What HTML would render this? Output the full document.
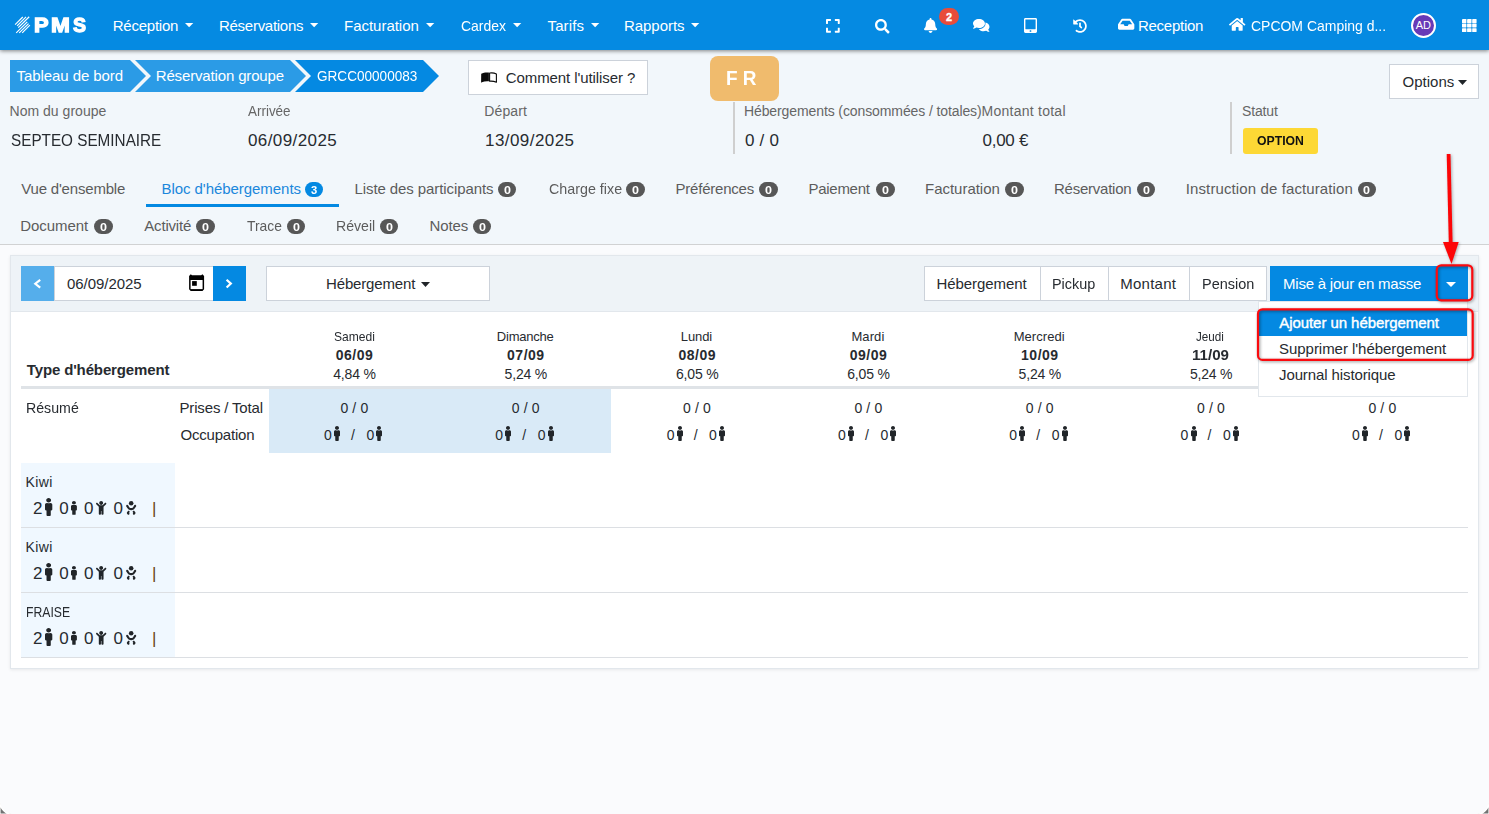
<!DOCTYPE html>
<html lang="fr"><head><meta charset="utf-8"><title>PMS - Réservation groupe</title>
<style>
html,body{margin:0;padding:0}
body{width:1489px;height:814px;position:relative;overflow:hidden;background:#fafbfd;font-family:"Liberation Sans",sans-serif;color:#212529}
.a{position:absolute;box-sizing:border-box}
.t{position:absolute;white-space:pre;line-height:1;margin:0;padding:0}
svg{position:absolute;overflow:visible}
.btn{background:#fff;border:1px solid #ccd2da}
.bd{border-radius:7.5px;width:18.4px;height:15px}
</style></head><body>
<!-- top area -->
<div class="a" style="left:0;top:0;width:1489px;height:245px;background:#f2f7fb;border-bottom:1px solid #d1d2d3"></div>
<!-- navbar -->
<div class="a" style="left:0;top:0;width:1489px;height:50px;background:#058ae2;box-shadow:0 1px 4px rgba(0,0,0,.48)"></div>
<svg style="left:0px;top:0px" width="40" height="40" viewBox="0 0 40 40"><line x1="15.1" y1="24.70" x2="22.8" y2="17.00" stroke="#fff" stroke-width="1.15"/><line x1="17.1" y1="25.80" x2="26.0" y2="16.90" stroke="#fff" stroke-width="1.15"/><line x1="18.3" y1="27.65" x2="29.2" y2="16.75" stroke="#fff" stroke-width="1.15"/><line x1="16.2" y1="32.90" x2="27.3" y2="21.80" stroke="#fff" stroke-width="1.15"/><line x1="19.2" y1="32.95" x2="28.6" y2="23.55" stroke="#fff" stroke-width="1.15"/><line x1="22.2" y1="32.90" x2="29.9" y2="25.20" stroke="#fff" stroke-width="1.15"/></svg><svg style="left:184.9px;top:22.9px" width="8.3" height="4.2" viewBox="0 0 8.3 4.2"><polygon points="0,0 8.300,0 4.150,4.200" fill="#fff"/></svg><svg style="left:309.5px;top:22.9px" width="8.3" height="4.2" viewBox="0 0 8.3 4.2"><polygon points="0,0 8.300,0 4.150,4.200" fill="#fff"/></svg><svg style="left:425.5px;top:22.9px" width="8.3" height="4.2" viewBox="0 0 8.3 4.2"><polygon points="0,0 8.300,0 4.150,4.200" fill="#fff"/></svg><svg style="left:512.5px;top:22.9px" width="8.3" height="4.2" viewBox="0 0 8.3 4.2"><polygon points="0,0 8.300,0 4.150,4.200" fill="#fff"/></svg><svg style="left:590.5px;top:22.9px" width="8.3" height="4.2" viewBox="0 0 8.3 4.2"><polygon points="0,0 8.300,0 4.150,4.200" fill="#fff"/></svg><svg style="left:690.5px;top:22.9px" width="8.3" height="4.2" viewBox="0 0 8.3 4.2"><polygon points="0,0 8.300,0 4.150,4.200" fill="#fff"/></svg>
<svg style="left:825.75px;top:18.2px" width="13.75" height="15.7" viewBox="0 0 448 512"><path d="M0 180V56c0-13.300 10.700-24 24-24h124c6.600 0 12 5.400 12 12v40c0 6.600-5.400 12-12 12H64v84c0 6.600-5.400 12-12 12H12c-6.600 0-12-5.400-12-12zM288 44v40c0 6.600 5.400 12 12 12h84v84c0 6.600 5.400 12 12 12h40c6.600 0 12-5.400 12-12V56c0-13.300-10.700-24-24-24H300c-6.600 0-12 5.400-12 12zm148 276h-40c-6.600 0-12 5.400-12 12v84h-84c-6.600 0-12 5.400-12 12v40c0 6.600 5.400 12 12 12h124c13.300 0 24-10.700 24-24V332c0-6.600-5.400-12-12-12zM160 468v-40c0-6.600-5.400-12-12-12H64v-84c0-6.600-5.400-12-12-12H12c-6.600 0-12 5.400-12 12v124c0 13.300 10.700 24 24 24h124c6.600 0 12-5.400 12-12z" fill="#fff"/></svg><svg style="left:874.5px;top:18.6px" width="14.6" height="14.6" viewBox="0 0 512 512"><path d="M505 442.700L405.300 343c-4.500-4.500-10.600-7-17-7H372c27.600-35.300 44-79.700 44-128C416 93.100 322.900 0 208 0S0 93.100 0 208s93.100 208 208 208c48.300 0 92.700-16.400 128-44v16.300c0 6.400 2.500 12.500 7 17l99.700 99.700c9.400 9.400 24.600 9.400 33.900 0l28.300-28.300c9.400-9.400 9.400-24.600.1-34zM208 336c-70.700 0-128-57.200-128-128 0-70.700 57.200-128 128-128 70.700 0 128 57.200 128 128 0 70.700-57.200 128-128 128z" fill="#fff"/></svg><svg style="left:924.2px;top:18.1px" width="13.1" height="15" viewBox="0 0 448 512"><path d="M224 512c35.320 0 63.970-28.650 63.970-64H160.030c0 35.350 28.650 64 63.970 64zm215.390-149.710c-19.320-20.760-55.470-51.990-55.470-154.290 0-77.700-54.480-139.900-127.940-155.160V32c0-17.670-14.320-32-31.980-32s-31.980 14.330-31.980 32v20.840C118.560 68.100 64.080 130.300 64.080 208c0 102.300-36.150 133.530-55.470 154.290-6 6.450-8.660 14.160-8.610 21.710.11 16.400 12.980 32 32.100 32h383.800c19.120 0 32-15.600 32.100-32 .05-7.550-2.610-15.270-8.610-21.710z" fill="#fff"/></svg><div class="a" style="left:939px;top:8px;width:20px;height:17px;border-radius:8.5px;background:#e84c3a"></div><svg style="left:972.6px;top:18.7px" width="16.4" height="13.1" viewBox="0 0 17 13.5"><path d="M6.2,0C2.8,0,0,2.1,0,4.7c0,1.1,.5,2.1,1.3,2.9C1,8.600,.3,9.300,.1,9.500c-.2,.2,0,.5,.2,.5c1.400,0,2.600-.6,3.300-1.100c.8,.3,1.700,.4,2.600,.4c3.400,0,6.200-2.100,6.200-4.700S9.600,0,6.200,0z" fill="#fff"/><path d="M13.400,5.200c0,2.900-3,5.200-6.900,5.300c1,1.300,2.900,2.100,5,2.100c.9,0,1.800-.1,2.600-.4c.7,.5,1.800,1.100,3.200,1.100c.3,0,.4-.3,.2-.5c-.2-.2-.9-.9-1.200-1.900c.8-.8,1.300-1.800,1.300-2.900c0-2.200-1.800-4-4.300-4.500c.1,.5,.1,1.100,.1,1.700z" fill="#fff" transform="translate(-.5,0)"/></svg><svg style="left:1023.7px;top:18px" width="13" height="15" viewBox="0 0 448 512"><path d="M400 0H48C21.500 0 0 21.500 0 48v416c0 26.500 21.500 48 48 48h352c26.500 0 48-21.500 48-48V48c0-26.500-21.500-48-48-48zM224 480c-17.700 0-32-14.300-32-32s14.300-32 32-32 32 14.300 32 32-14.300 32-32 32zm176-108c0 6.600-5.400 12-12 12H60c-6.600 0-12-5.400-12-12V60c0-6.600 5.400-12 12-12h328c6.600 0 12 5.400 12 12v312z" fill="#fff"/></svg><svg style="left:1073px;top:19.2px" width="14" height="14" viewBox="0 0 512 512"><path d="M504 255.531c.253 136.640-111.180 248.372-247.820 248.468-59.015.042-113.223-20.530-155.822-54.911-11.077-8.940-11.905-25.541-1.839-35.607l11.267-11.267c8.609-8.609 22.353-9.551 31.891-1.984C173.062 425.135 212.781 440 256 440c101.705 0 184-82.311 184-184 0-101.705-82.311-184-184-184-48.814 0-93.149 18.969-126.068 49.932l50.754 50.754c10.080 10.080 2.941 27.314-11.313 27.314H24c-8.837 0-16-7.163-16-16V38.627c0-14.254 17.234-21.393 27.314-11.314l49.372 49.372C129.209 34.136 189.552 8 256 8c136.810 0 247.747 110.780 248 247.531zm-180.912 78.784l9.823-12.630c8.138-10.463 6.253-25.542-4.210-33.679L288 256.349V152c0-13.255-10.745-24-24-24h-16c-13.255 0-24 10.745-24 24v135.651l65.409 50.874c10.463 8.137 25.541 6.253 33.679-4.210z" fill="#fff"/></svg><svg style="left:1117.7px;top:17.2px" width="16.35" height="14.53" viewBox="0 0 576 512"><path d="M567.938 243.908L462.250 85.374A48.003 48.003 0 0 0 422.311 64H153.689a48 48 0 0 0-39.938 21.374L8.062 243.908A47.994 47.994 0 0 0 0 270.533V400c0 26.510 21.490 48 48 48h480c26.510 0 48-21.490 48-48V270.533a47.994 47.994 0 0 0-8.062-26.625zM162.252 128h251.497l85.333 128H376l-32 64H232l-32-64H76.918l85.334-128z" fill="#fff"/></svg><svg style="left:1229.1px;top:17.2px" width="16.4" height="14.6" viewBox="0 0 576 512"><path d="M280.370 148.260L96 300.110V464a16 16 0 0 0 16 16l112.060-.290a16 16 0 0 0 15.920-16V368a16 16 0 0 1 16-16h64a16 16 0 0 1 16 16v95.640a16 16 0 0 0 16 16.050L464 480a16 16 0 0 0 16-16V300L295.670 148.260a12.190 12.190 0 0 0-15.300 0zM571.600 251.470L488 182.560V44.050a12 12 0 0 0-12-12h-56a12 12 0 0 0-12 12v72.610L318.470 43a48 48 0 0 0-61 0L4.340 251.470a12 12 0 0 0-1.600 16.900l25.500 31A12 12 0 0 0 45.150 301l235.220-193.740a12.190 12.190 0 0 1 15.300 0L530.900 301a12 12 0 0 0 16.900-1.600l25.500-31a12 12 0 0 0-1.700-16.930z" fill="#fff"/></svg><div class="a" style="left:1411px;top:13px;width:25px;height:25px;border-radius:50%;background:#673ab7;border:2px solid #fff"></div><svg style="left:1462px;top:19px" width="15" height="13.2" viewBox="0 0 15 13.200"><rect x="0.0" y="0.0" width="4.400" height="3.900" rx=".5" fill="#fff"/><rect x="5.1" y="0.0" width="4.400" height="3.900" rx=".5" fill="#fff"/><rect x="10.2" y="0.0" width="4.400" height="3.900" rx=".5" fill="#fff"/><rect x="0.0" y="4.6" width="4.400" height="3.900" rx=".5" fill="#fff"/><rect x="5.1" y="4.6" width="4.400" height="3.900" rx=".5" fill="#fff"/><rect x="10.2" y="4.6" width="4.400" height="3.900" rx=".5" fill="#fff"/><rect x="0.0" y="9.2" width="4.400" height="3.900" rx=".5" fill="#fff"/><rect x="5.1" y="9.2" width="4.400" height="3.900" rx=".5" fill="#fff"/><rect x="10.2" y="9.2" width="4.400" height="3.900" rx=".5" fill="#fff"/></svg>
<!-- breadcrumb -->
<svg style="left:0;top:60px" width="460" height="32" viewBox="0 60 460 32">
<polygon points="10,60 130,60 146,76 130,92 10,92" fill="#2b9be6"/>
<polygon points="135,60 290,60 306,76 290,92 135,92 151,76" fill="#2b9be6"/>
<polygon points="295,60 423,60 439,76 423,92 295,92 311,76" fill="#0489e2"/>
</svg>
<div class="a btn" style="left:468px;top:60px;width:180px;height:35px"></div>
<svg style="left:481px;top:72.3px" width="16" height="10.8" viewBox="0 0 16 10.8"><path d="M0.200,1.800C2.600,.5,5.400,.2,7.900,.6V9.300C5.300,9,2.800,9.400,.9,10.300L.1,10.700z" fill="#0a0a0a"/><path d="M15.400,1.900C13.400,.9,10.800,.7,8.600,1V9.200C10.900,9,13.300,9.300,15.400,10.300z" fill="#fff" stroke="#0a0a0a" stroke-width="1.100" stroke-linejoin="round"/></svg>
<div class="a" style="left:710px;top:56px;width:69px;height:45px;border-radius:8px;background:#f0bb6d"></div>
<div class="a btn" style="left:1389px;top:64px;width:90px;height:35px"></div>
<svg style="left:1457.5px;top:80px" width="9" height="5" viewBox="0 0 9 5"><polygon points="0,0 9,0 4.5,5" fill="#212529"/></svg>
<!-- separators -->
<div class="a" style="left:733px;top:102px;width:2px;height:52px;background:#cfcfcf"></div>
<div class="a" style="left:1230px;top:102px;width:2px;height:52px;background:#cfcfcf"></div>
<div class="a" style="left:1243px;top:128px;width:75px;height:26px;border-radius:3px;background:#fdd835"></div>
<!-- tab underline -->
<div class="a" style="left:146px;top:204px;width:193px;height:3px;background:#0489e2"></div>
<div class="a bd" style="left:304.8px;top:182px;background:#0489e2"></div><div class="a bd" style="left:498px;top:182px;background:#575757"></div><div class="a bd" style="left:626.25px;top:182px;background:#575757"></div><div class="a bd" style="left:759.25px;top:182px;background:#575757"></div><div class="a bd" style="left:876.25px;top:182px;background:#575757"></div><div class="a bd" style="left:1005.25px;top:182px;background:#575757"></div><div class="a bd" style="left:1137px;top:182px;background:#575757"></div><div class="a bd" style="left:1357.5px;top:182px;background:#575757"></div><div class="a bd" style="left:94.25px;top:219px;background:#575757"></div><div class="a bd" style="left:196.25px;top:219px;background:#575757"></div><div class="a bd" style="left:287px;top:219px;background:#575757"></div><div class="a bd" style="left:380px;top:219px;background:#575757"></div><div class="a bd" style="left:473px;top:219px;background:#575757"></div>
<!-- card -->
<div class="a" style="left:10px;top:255px;width:1469px;height:414px;background:#fff;border:1px solid #e2e7ec;box-shadow:0 1px 3px rgba(0,0,0,.08)"></div>
<div class="a" style="left:11px;top:256px;width:1467px;height:56px;background:#eef3f7;border-bottom:1px solid #e2e7ec"></div>
<!-- toolbar -->
<div class="a" style="left:21px;top:266px;width:33px;height:35px;background:#55aeeb"></div>
<div class="a btn" style="left:54px;top:266px;width:160px;height:35px"></div>
<div class="a" style="left:213px;top:266px;width:33px;height:35px;background:#0489e2"></div>
<svg style="left:0;top:0" width="1489" height="814" viewBox="0 0 1489 814">
<polyline points="40.200,279.800 35.300,283.750 40.200,287.700" fill="none" stroke="#fff" stroke-width="2.200"/>
<polyline points="226.600,279.700 230.850,283.600 226.600,287.500" fill="none" stroke="#fff" stroke-width="2.200"/>
</svg>
<svg style="left:188.9px;top:274px" width="15.2" height="17" viewBox="0 0 15.2 17"><path d="M1.800,.2L3,1.200H12.200L13.400,.2L15.100,1.900V15.300L13.500,16.900H1.700L.1,15.300V1.900z" fill="#000"/><rect x="1.600" y="6" width="12" height="9.100" fill="#fff"/><rect x="3.100" y="7.100" width="4.700" height="4.700" fill="#000"/></svg>
<div class="a btn" style="left:266px;top:266px;width:224px;height:35px"></div>
<svg style="left:420.5px;top:282px" width="9" height="5" viewBox="0 0 9 5"><polygon points="0,0 9,0 4.5,5" fill="#212529"/></svg>
<div class="a btn" style="left:924px;top:266px;width:117px;height:35px"></div>
<div class="a btn" style="left:1040px;top:266px;width:69px;height:35px"></div>
<div class="a btn" style="left:1108px;top:266px;width:82px;height:35px"></div>
<div class="a btn" style="left:1189px;top:266px;width:78px;height:35px"></div>
<div class="a" style="left:1270px;top:266px;width:198px;height:35px;background:#0489e2"></div>
<!-- table -->
<div class="a" style="left:21px;top:386px;width:1447px;height:3px;background:#dfe3e7"></div>
<div class="a" style="left:269px;top:389px;width:342px;height:64px;background:#d9eaf7"></div>
<div class="a" style="left:21px;top:463px;width:154px;height:194px;background:#f0f8ff"></div>
<div class="a" style="left:21px;top:527px;width:1447px;height:1px;background:#dcdfe3"></div>
<div class="a" style="left:21px;top:592px;width:1447px;height:1px;background:#dcdfe3"></div>
<div class="a" style="left:21px;top:657px;width:1447px;height:1px;background:#dcdfe3"></div>
<svg style="left:334.09999999999997px;top:425.8px" width="6" height="15" viewBox="0 0 192 512" preserveAspectRatio="none"><path d="M96 0c35.346 0 64 28.654 64 64s-28.654 64-64 64-64-28.654-64-64S60.654 0 96 0m48 144h-11.360c-22.711 10.443-49.590 10.894-73.280 0H48c-26.510 0-48 21.490-48 48v136c0 13.255 10.745 24 24 24h16v136c0 13.255 10.745 24 24 24h64c13.255 0 24-10.745 24-24V352h16c13.255 0 24-10.745 24-24V192c0-26.510-21.490-48-48-48z" fill="#212529"/></svg><svg style="left:376.4px;top:425.8px" width="6" height="15" viewBox="0 0 192 512" preserveAspectRatio="none"><path d="M96 0c35.346 0 64 28.654 64 64s-28.654 64-64 64-64-28.654-64-64S60.654 0 96 0m48 144h-11.360c-22.711 10.443-49.590 10.894-73.280 0H48c-26.510 0-48 21.490-48 48v136c0 13.255 10.745 24 24 24h16v136c0 13.255 10.745 24 24 24h64c13.255 0 24-10.745 24-24V352h16c13.255 0 24-10.745 24-24V192c0-26.510-21.490-48-48-48z" fill="#212529"/></svg><svg style="left:505.40000000000003px;top:425.8px" width="6" height="15" viewBox="0 0 192 512" preserveAspectRatio="none"><path d="M96 0c35.346 0 64 28.654 64 64s-28.654 64-64 64-64-28.654-64-64S60.654 0 96 0m48 144h-11.360c-22.711 10.443-49.590 10.894-73.280 0H48c-26.510 0-48 21.490-48 48v136c0 13.255 10.745 24 24 24h16v136c0 13.255 10.745 24 24 24h64c13.255 0 24-10.745 24-24V352h16c13.255 0 24-10.745 24-24V192c0-26.510-21.490-48-48-48z" fill="#212529"/></svg><svg style="left:547.7px;top:425.8px" width="6" height="15" viewBox="0 0 192 512" preserveAspectRatio="none"><path d="M96 0c35.346 0 64 28.654 64 64s-28.654 64-64 64-64-28.654-64-64S60.654 0 96 0m48 144h-11.360c-22.711 10.443-49.590 10.894-73.280 0H48c-26.510 0-48 21.490-48 48v136c0 13.255 10.745 24 24 24h16v136c0 13.255 10.745 24 24 24h64c13.255 0 24-10.745 24-24V352h16c13.255 0 24-10.745 24-24V192c0-26.510-21.490-48-48-48z" fill="#212529"/></svg><svg style="left:676.8000000000001px;top:425.8px" width="6" height="15" viewBox="0 0 192 512" preserveAspectRatio="none"><path d="M96 0c35.346 0 64 28.654 64 64s-28.654 64-64 64-64-28.654-64-64S60.654 0 96 0m48 144h-11.360c-22.711 10.443-49.590 10.894-73.280 0H48c-26.510 0-48 21.490-48 48v136c0 13.255 10.745 24 24 24h16v136c0 13.255 10.745 24 24 24h64c13.255 0 24-10.745 24-24V352h16c13.255 0 24-10.745 24-24V192c0-26.510-21.490-48-48-48z" fill="#212529"/></svg><svg style="left:719.1px;top:425.8px" width="6" height="15" viewBox="0 0 192 512" preserveAspectRatio="none"><path d="M96 0c35.346 0 64 28.654 64 64s-28.654 64-64 64-64-28.654-64-64S60.654 0 96 0m48 144h-11.360c-22.711 10.443-49.590 10.894-73.280 0H48c-26.510 0-48 21.490-48 48v136c0 13.255 10.745 24 24 24h16v136c0 13.255 10.745 24 24 24h64c13.255 0 24-10.745 24-24V352h16c13.255 0 24-10.745 24-24V192c0-26.510-21.490-48-48-48z" fill="#212529"/></svg><svg style="left:848.1px;top:425.8px" width="6" height="15" viewBox="0 0 192 512" preserveAspectRatio="none"><path d="M96 0c35.346 0 64 28.654 64 64s-28.654 64-64 64-64-28.654-64-64S60.654 0 96 0m48 144h-11.360c-22.711 10.443-49.590 10.894-73.280 0H48c-26.510 0-48 21.490-48 48v136c0 13.255 10.745 24 24 24h16v136c0 13.255 10.745 24 24 24h64c13.255 0 24-10.745 24-24V352h16c13.255 0 24-10.745 24-24V192c0-26.510-21.490-48-48-48z" fill="#212529"/></svg><svg style="left:890.4px;top:425.8px" width="6" height="15" viewBox="0 0 192 512" preserveAspectRatio="none"><path d="M96 0c35.346 0 64 28.654 64 64s-28.654 64-64 64-64-28.654-64-64S60.654 0 96 0m48 144h-11.360c-22.711 10.443-49.590 10.894-73.280 0H48c-26.510 0-48 21.490-48 48v136c0 13.255 10.745 24 24 24h16v136c0 13.255 10.745 24 24 24h64c13.255 0 24-10.745 24-24V352h16c13.255 0 24-10.745 24-24V192c0-26.510-21.490-48-48-48z" fill="#212529"/></svg><svg style="left:1019.4000000000001px;top:425.8px" width="6" height="15" viewBox="0 0 192 512" preserveAspectRatio="none"><path d="M96 0c35.346 0 64 28.654 64 64s-28.654 64-64 64-64-28.654-64-64S60.654 0 96 0m48 144h-11.360c-22.711 10.443-49.590 10.894-73.280 0H48c-26.510 0-48 21.490-48 48v136c0 13.255 10.745 24 24 24h16v136c0 13.255 10.745 24 24 24h64c13.255 0 24-10.745 24-24V352h16c13.255 0 24-10.745 24-24V192c0-26.510-21.490-48-48-48z" fill="#212529"/></svg><svg style="left:1061.7px;top:425.8px" width="6" height="15" viewBox="0 0 192 512" preserveAspectRatio="none"><path d="M96 0c35.346 0 64 28.654 64 64s-28.654 64-64 64-64-28.654-64-64S60.654 0 96 0m48 144h-11.360c-22.711 10.443-49.590 10.894-73.280 0H48c-26.510 0-48 21.490-48 48v136c0 13.255 10.745 24 24 24h16v136c0 13.255 10.745 24 24 24h64c13.255 0 24-10.745 24-24V352h16c13.255 0 24-10.745 24-24V192c0-26.510-21.490-48-48-48z" fill="#212529"/></svg><svg style="left:1190.7px;top:425.8px" width="6" height="15" viewBox="0 0 192 512" preserveAspectRatio="none"><path d="M96 0c35.346 0 64 28.654 64 64s-28.654 64-64 64-64-28.654-64-64S60.654 0 96 0m48 144h-11.360c-22.711 10.443-49.590 10.894-73.280 0H48c-26.510 0-48 21.490-48 48v136c0 13.255 10.745 24 24 24h16v136c0 13.255 10.745 24 24 24h64c13.255 0 24-10.745 24-24V352h16c13.255 0 24-10.745 24-24V192c0-26.510-21.490-48-48-48z" fill="#212529"/></svg><svg style="left:1233.0px;top:425.8px" width="6" height="15" viewBox="0 0 192 512" preserveAspectRatio="none"><path d="M96 0c35.346 0 64 28.654 64 64s-28.654 64-64 64-64-28.654-64-64S60.654 0 96 0m48 144h-11.360c-22.711 10.443-49.590 10.894-73.280 0H48c-26.510 0-48 21.490-48 48v136c0 13.255 10.745 24 24 24h16v136c0 13.255 10.745 24 24 24h64c13.255 0 24-10.745 24-24V352h16c13.255 0 24-10.745 24-24V192c0-26.510-21.490-48-48-48z" fill="#212529"/></svg><svg style="left:1362.1000000000001px;top:425.8px" width="6" height="15" viewBox="0 0 192 512" preserveAspectRatio="none"><path d="M96 0c35.346 0 64 28.654 64 64s-28.654 64-64 64-64-28.654-64-64S60.654 0 96 0m48 144h-11.360c-22.711 10.443-49.590 10.894-73.280 0H48c-26.510 0-48 21.490-48 48v136c0 13.255 10.745 24 24 24h16v136c0 13.255 10.745 24 24 24h64c13.255 0 24-10.745 24-24V352h16c13.255 0 24-10.745 24-24V192c0-26.510-21.490-48-48-48z" fill="#212529"/></svg><svg style="left:1404.4px;top:425.8px" width="6" height="15" viewBox="0 0 192 512" preserveAspectRatio="none"><path d="M96 0c35.346 0 64 28.654 64 64s-28.654 64-64 64-64-28.654-64-64S60.654 0 96 0m48 144h-11.360c-22.711 10.443-49.590 10.894-73.280 0H48c-26.510 0-48 21.490-48 48v136c0 13.255 10.745 24 24 24h16v136c0 13.255 10.745 24 24 24h64c13.255 0 24-10.745 24-24V352h16c13.255 0 24-10.745 24-24V192c0-26.510-21.490-48-48-48z" fill="#212529"/></svg><svg style="left:45.4px;top:498px" width="7.3" height="18" viewBox="0 0 192 512" preserveAspectRatio="none"><path d="M96 0c35.346 0 64 28.654 64 64s-28.654 64-64 64-64-28.654-64-64S60.654 0 96 0m48 144h-11.360c-22.711 10.443-49.590 10.894-73.280 0H48c-26.510 0-48 21.490-48 48v136c0 13.255 10.745 24 24 24h16v136c0 13.255 10.745 24 24 24h64c13.255 0 24-10.745 24-24V352h16c13.255 0 24-10.745 24-24V192c0-26.510-21.490-48-48-48z" fill="#212529"/></svg><svg style="left:71px;top:501px" width="5.9" height="13.8" viewBox="0 0 192 512" preserveAspectRatio="none"><path d="M96 0c35.346 0 64 28.654 64 64s-28.654 64-64 64-64-28.654-64-64S60.654 0 96 0m48 144h-11.360c-22.711 10.443-49.590 10.894-73.280 0H48c-26.510 0-48 21.490-48 48v136c0 13.255 10.745 24 24 24h16v136c0 13.255 10.745 24 24 24h64c13.255 0 24-10.745 24-24V352h16c13.255 0 24-10.745 24-24V192c0-26.510-21.490-48-48-48z" fill="#212529"/></svg><svg style="left:95.7px;top:501px" width="10.35" height="13.8" viewBox="0 0 384 512"><path d="M120 72c0-39.765 32.235-72 72-72s72 32.235 72 72c0 39.764-32.235 72-72 72s-72-32.236-72-72zm254.627 1.373c-12.496-12.497-32.758-12.497-45.254 0L242.745 160H141.254L54.627 73.373c-12.496-12.497-32.758-12.497-45.254 0-12.497 12.497-12.497 32.758 0 45.255L104 213.254V480c0 17.673 14.327 32 32 32h16c17.673 0 32-14.327 32-32V368h16v112c0 17.673 14.327 32 32 32h16c17.673 0 32-14.327 32-32V213.254l94.627-94.627c12.497-12.497 12.497-32.757 0-45.254z" fill="#212529"/></svg><svg style="left:125.7px;top:501px" width="10.35" height="13.8" viewBox="0 0 384 512"><g fill="#212529"><circle cx="192" cy="80" r="84"/><path d="M22 148c-19 13-24 39-11 58l52 76c28 40 74 64 123 64h12c49 0 95-24 123-64l52-76c13-19 8-45-11-58s-45-8-58 11l-40 70c-12 18-44 33-66 33h-12c-22 0-54-15-66-33l-40-70c-13-19-39-24-58-11z"/><path d="M122 372c-17-13-41-10-54 7l-30 40c-12 16-11 38 2 53l24 28c14 16 38 18 54 4s18-38 4-54l-8-9 14-19c13-17 10-41-6-50z"/><path d="M262 372c17-13 41-10 54 7l30 40c12 16 11 38-2 53l-24 28c-14 16-38 18-54 4s-18-38-4-54l8-9-14-19c-13-17-10-41 6-50z"/></g></svg><svg style="left:45.4px;top:563px" width="7.3" height="18" viewBox="0 0 192 512" preserveAspectRatio="none"><path d="M96 0c35.346 0 64 28.654 64 64s-28.654 64-64 64-64-28.654-64-64S60.654 0 96 0m48 144h-11.360c-22.711 10.443-49.590 10.894-73.280 0H48c-26.510 0-48 21.490-48 48v136c0 13.255 10.745 24 24 24h16v136c0 13.255 10.745 24 24 24h64c13.255 0 24-10.745 24-24V352h16c13.255 0 24-10.745 24-24V192c0-26.510-21.490-48-48-48z" fill="#212529"/></svg><svg style="left:71px;top:566px" width="5.9" height="13.8" viewBox="0 0 192 512" preserveAspectRatio="none"><path d="M96 0c35.346 0 64 28.654 64 64s-28.654 64-64 64-64-28.654-64-64S60.654 0 96 0m48 144h-11.360c-22.711 10.443-49.590 10.894-73.280 0H48c-26.510 0-48 21.490-48 48v136c0 13.255 10.745 24 24 24h16v136c0 13.255 10.745 24 24 24h64c13.255 0 24-10.745 24-24V352h16c13.255 0 24-10.745 24-24V192c0-26.510-21.490-48-48-48z" fill="#212529"/></svg><svg style="left:95.7px;top:566px" width="10.35" height="13.8" viewBox="0 0 384 512"><path d="M120 72c0-39.765 32.235-72 72-72s72 32.235 72 72c0 39.764-32.235 72-72 72s-72-32.236-72-72zm254.627 1.373c-12.496-12.497-32.758-12.497-45.254 0L242.745 160H141.254L54.627 73.373c-12.496-12.497-32.758-12.497-45.254 0-12.497 12.497-12.497 32.758 0 45.255L104 213.254V480c0 17.673 14.327 32 32 32h16c17.673 0 32-14.327 32-32V368h16v112c0 17.673 14.327 32 32 32h16c17.673 0 32-14.327 32-32V213.254l94.627-94.627c12.497-12.497 12.497-32.757 0-45.254z" fill="#212529"/></svg><svg style="left:125.7px;top:566px" width="10.35" height="13.8" viewBox="0 0 384 512"><g fill="#212529"><circle cx="192" cy="80" r="84"/><path d="M22 148c-19 13-24 39-11 58l52 76c28 40 74 64 123 64h12c49 0 95-24 123-64l52-76c13-19 8-45-11-58s-45-8-58 11l-40 70c-12 18-44 33-66 33h-12c-22 0-54-15-66-33l-40-70c-13-19-39-24-58-11z"/><path d="M122 372c-17-13-41-10-54 7l-30 40c-12 16-11 38 2 53l24 28c14 16 38 18 54 4s18-38 4-54l-8-9 14-19c13-17 10-41-6-50z"/><path d="M262 372c17-13 41-10 54 7l30 40c12 16 11 38-2 53l-24 28c-14 16-38 18-54 4s-18-38-4-54l8-9-14-19c-13-17-10-41 6-50z"/></g></svg><svg style="left:45.4px;top:628px" width="7.3" height="18" viewBox="0 0 192 512" preserveAspectRatio="none"><path d="M96 0c35.346 0 64 28.654 64 64s-28.654 64-64 64-64-28.654-64-64S60.654 0 96 0m48 144h-11.360c-22.711 10.443-49.590 10.894-73.280 0H48c-26.510 0-48 21.490-48 48v136c0 13.255 10.745 24 24 24h16v136c0 13.255 10.745 24 24 24h64c13.255 0 24-10.745 24-24V352h16c13.255 0 24-10.745 24-24V192c0-26.510-21.490-48-48-48z" fill="#212529"/></svg><svg style="left:71px;top:631px" width="5.9" height="13.8" viewBox="0 0 192 512" preserveAspectRatio="none"><path d="M96 0c35.346 0 64 28.654 64 64s-28.654 64-64 64-64-28.654-64-64S60.654 0 96 0m48 144h-11.360c-22.711 10.443-49.590 10.894-73.280 0H48c-26.510 0-48 21.490-48 48v136c0 13.255 10.745 24 24 24h16v136c0 13.255 10.745 24 24 24h64c13.255 0 24-10.745 24-24V352h16c13.255 0 24-10.745 24-24V192c0-26.510-21.490-48-48-48z" fill="#212529"/></svg><svg style="left:95.7px;top:631px" width="10.35" height="13.8" viewBox="0 0 384 512"><path d="M120 72c0-39.765 32.235-72 72-72s72 32.235 72 72c0 39.764-32.235 72-72 72s-72-32.236-72-72zm254.627 1.373c-12.496-12.497-32.758-12.497-45.254 0L242.745 160H141.254L54.627 73.373c-12.496-12.497-32.758-12.497-45.254 0-12.497 12.497-12.497 32.758 0 45.255L104 213.254V480c0 17.673 14.327 32 32 32h16c17.673 0 32-14.327 32-32V368h16v112c0 17.673 14.327 32 32 32h16c17.673 0 32-14.327 32-32V213.254l94.627-94.627c12.497-12.497 12.497-32.757 0-45.254z" fill="#212529"/></svg><svg style="left:125.7px;top:631px" width="10.35" height="13.8" viewBox="0 0 384 512"><g fill="#212529"><circle cx="192" cy="80" r="84"/><path d="M22 148c-19 13-24 39-11 58l52 76c28 40 74 64 123 64h12c49 0 95-24 123-64l52-76c13-19 8-45-11-58s-45-8-58 11l-40 70c-12 18-44 33-66 33h-12c-22 0-54-15-66-33l-40-70c-13-19-39-24-58-11z"/><path d="M122 372c-17-13-41-10-54 7l-30 40c-12 16-11 38 2 53l24 28c14 16 38 18 54 4s18-38 4-54l-8-9 14-19c13-17 10-41-6-50z"/><path d="M262 372c17-13 41-10 54 7l30 40c12 16 11 38-2 53l-24 28c-14 16-38 18-54 4s-18-38-4-54l8-9-14-19c-13-17-10-41 6-50z"/></g></svg>
<!-- dropdown menu -->
<div class="a" style="left:1258px;top:301px;width:210px;height:96px;background:#fff;border:1px solid #e2e7ec"></div>
<div class="a" style="left:1259px;top:310px;width:208px;height:26px;background:#0489e2"></div>
<!-- red annotations -->
<svg style="left:1446px;top:282px" width="10" height="5" viewBox="0 0 10 5"><polygon points="0,0 10,0 5,5" fill="#fff"/></svg>
<svg style="left:0;top:0;filter:drop-shadow(1px 1.500px 1.800px rgba(0,0,0,.42))" width="1489" height="814" viewBox="0 0 1489 814">
<rect x="1258" y="309.300" width="214.700" height="50.600" rx="4.500" fill="none" stroke="#fb0a0e" stroke-width="2.200"/>
<rect x="1436.800" y="265.300" width="35.500" height="35" rx="4.500" fill="none" stroke="#fb0a0e" stroke-width="2.200"/>
</svg>
<svg style="left:0;top:0;filter:drop-shadow(1.500px 1.500px 1.500px rgba(0,0,0,.3))" width="1489" height="814" viewBox="0 0 1489 814">
<line x1="1448.600" y1="154" x2="1450.700" y2="243" stroke="#fd0507" stroke-width="3.800"/>
<polygon points="1443,242.100 1458.700,242.100 1451.500,264.100" fill="#fd0507"/>
</svg>
<svg style="left:0px;top:802px" width="12" height="12" viewBox="0 0 12 12"><path d="M0,0A12,12 0 0 0 12,12H0z" fill="#737373" stroke="#fff" stroke-width="1.200"/></svg><svg style="left:1477px;top:802px" width="12" height="12" viewBox="0 0 12 12"><path d="M12,0A12,12 0 0 1 0,12H12z" fill="#737373" stroke="#fff" stroke-width="1.200"/></svg>
<span class="t" style="left:33.63px;top:15.30px;font-size:20.5px;color:#ffffff;font-weight:700;-webkit-text-stroke:1.3px #ffffff"><span style="display:inline-block;width:16.99px;transform:scaleX(1.0677);transform-origin:0 0">P</span><span style="display:inline-block;width:22.40px;transform:scaleX(1.1043);transform-origin:0 0">M</span><span style="display:inline-block;width:30.00px;transform:scaleX(0.9510);transform-origin:0 0">S</span></span>
<span class="t" style="left:112.75px;top:18.00px;font-size:15px;color:#ffffff;letter-spacing:-0.244px">Réception</span>
<span class="t" style="left:219.00px;top:18.00px;font-size:15px;color:#ffffff;letter-spacing:-0.276px">Réservations</span>
<span class="t" style="left:344.00px;top:18.00px;font-size:15px;color:#ffffff;letter-spacing:-0.019px">Facturation</span>
<span class="t" style="left:460.50px;top:18.00px;font-size:15px;color:#ffffff;transform:scale(0.9313,1);transform-origin:0 13.00px">Cardex</span>
<span class="t" style="left:547.50px;top:18.00px;font-size:15px;color:#ffffff;letter-spacing:0.133px">Tarifs</span>
<span class="t" style="left:624.00px;top:18.00px;font-size:15px;color:#ffffff;letter-spacing:-0.052px">Rapports</span>
<span class="t" style="left:1138.00px;top:18.00px;font-size:15px;color:#ffffff;letter-spacing:-0.275px">Reception</span>
<span class="t" style="left:1251.00px;top:18.00px;font-size:15px;color:#ffffff;transform:scale(0.9314,1);transform-origin:0 13.00px">CPCOM Camping d...</span>
<span class="t" style="left:16.50px;top:68.00px;font-size:15px;color:#ffffff;letter-spacing:-0.071px">Tableau de bord</span>
<span class="t" style="left:155.75px;top:68.00px;font-size:15px;color:#ffffff;letter-spacing:-0.151px">Réservation groupe</span>
<span class="t" style="left:317.00px;top:68.00px;font-size:15px;color:#ffffff;transform:scale(0.9045,1);transform-origin:0 13.00px">GRCC00000083</span>
<span class="t" style="left:505.75px;top:70.00px;font-size:15px;color:#272b30;letter-spacing:-0.086px">Comment l'utiliser ?</span>
<span class="t" style="left:726.03px;top:69.00px;font-size:19.5px;color:#ffffff;font-weight:700;transform:scale(0.9727,1);transform-origin:0 16.00px">F R</span>
<span class="t" style="left:1402.50px;top:74.00px;font-size:15px;color:#272b30;letter-spacing:0.009px">Options</span>
<span class="t" style="left:9.50px;top:104.00px;font-size:14px;color:#666666;letter-spacing:0.024px">Nom du groupe</span>
<span class="t" style="left:248.00px;top:104.00px;font-size:14px;color:#666666;transform:scale(0.9594,1);transform-origin:0 12.00px">Arrivée</span>
<span class="t" style="left:484.30px;top:104.00px;font-size:14px;color:#666666;letter-spacing:0.094px">Départ</span>
<span class="t" style="left:744.00px;top:104.00px;font-size:14px;color:#666666;letter-spacing:-0.104px">Hébergements (consommées / totales)</span>
<span class="t" style="left:981.50px;top:104.00px;font-size:14px;color:#666666;letter-spacing:0.256px">Montant total</span>
<span class="t" style="left:1242.00px;top:104.00px;font-size:14px;color:#666666;letter-spacing:-0.138px">Statut</span>
<span class="t" style="left:10.50px;top:131.50px;font-size:17px;color:#272b30;transform:scale(0.8989,1);transform-origin:0 14.00px">SEPTEO SEMINAIRE</span>
<span class="t" style="left:248.00px;top:131.50px;font-size:17px;color:#272b30;letter-spacing:0.402px">06/09/2025</span>
<span class="t" style="left:485.00px;top:131.50px;font-size:17px;color:#272b30;letter-spacing:0.441px">13/09/2025</span>
<span class="t" style="left:745.00px;top:131.50px;font-size:17px;color:#272b30;letter-spacing:0.219px">0 / 0</span>
<span class="t" style="left:982.50px;top:131.50px;font-size:17px;color:#272b30;letter-spacing:-0.262px">0,00 €</span>
<span class="t" style="left:1257.00px;top:134.00px;font-size:13px;color:#111111;font-weight:700;transform:scale(0.9404,1);transform-origin:0 11.00px">OPTION</span>
<span class="t" style="left:21.25px;top:181.25px;font-size:15px;color:#5c5c5c;letter-spacing:-0.189px">Vue d'ensemble</span>
<span class="t" style="left:161.50px;top:181.25px;font-size:15px;color:#1b87dc;letter-spacing:-0.053px">Bloc d'hébergements</span>
<span class="t" style="left:354.50px;top:181.25px;font-size:15px;color:#5c5c5c;letter-spacing:-0.091px">Liste des participants</span>
<span class="t" style="left:548.50px;top:181.25px;font-size:15px;color:#5c5c5c;transform:scale(0.9527,1);transform-origin:0 13.00px">Charge fixe</span>
<span class="t" style="left:675.50px;top:181.25px;font-size:15px;color:#5c5c5c;letter-spacing:-0.212px">Préférences</span>
<span class="t" style="left:808.50px;top:181.25px;font-size:15px;color:#5c5c5c;letter-spacing:-0.279px">Paiement</span>
<span class="t" style="left:925.00px;top:181.25px;font-size:15px;color:#5c5c5c;letter-spacing:-0.019px">Facturation</span>
<span class="t" style="left:1054.00px;top:181.25px;font-size:15px;color:#5c5c5c;letter-spacing:-0.245px">Réservation</span>
<span class="t" style="left:1185.75px;top:181.25px;font-size:15px;color:#5c5c5c;letter-spacing:0.113px">Instruction de facturation</span>
<span class="t" style="left:20.25px;top:218.00px;font-size:15px;color:#5c5c5c;letter-spacing:-0.064px">Document</span>
<span class="t" style="left:144.25px;top:218.00px;font-size:15px;color:#5c5c5c;letter-spacing:-0.179px">Activité</span>
<span class="t" style="left:247.00px;top:218.00px;font-size:15px;color:#5c5c5c;transform:scale(0.9214,1);transform-origin:0 13.00px">Trace</span>
<span class="t" style="left:336.06px;top:218.00px;font-size:15px;color:#5c5c5c;transform:scale(0.9418,1);transform-origin:0 13.00px">Réveil</span>
<span class="t" style="left:429.50px;top:218.00px;font-size:15px;color:#5c5c5c;letter-spacing:-0.109px">Notes</span>
<span class="t" style="left:67.00px;top:276.00px;font-size:15px;color:#272b30;letter-spacing:-0.053px">06/09/2025</span>
<span class="t" style="left:326.00px;top:276.00px;font-size:15px;color:#272b30;letter-spacing:-0.147px">Hébergement</span>
<span class="t" style="left:936.50px;top:276.00px;font-size:15px;color:#272b30;letter-spacing:-0.072px">Hébergement</span>
<span class="t" style="left:1052.04px;top:276.00px;font-size:15px;color:#272b30;transform:scale(0.9615,1);transform-origin:0 13.00px">Pickup</span>
<span class="t" style="left:1120.25px;top:276.00px;font-size:15px;color:#272b30;letter-spacing:0.245px">Montant</span>
<span class="t" style="left:1201.54px;top:276.00px;font-size:15px;color:#272b30;transform:scale(0.9647,1);transform-origin:0 13.00px">Pension</span>
<span class="t" style="left:1283.00px;top:276.00px;font-size:15px;color:#ffffff;letter-spacing:-0.222px">Mise à jour en masse</span>
<span class="t" style="left:26.75px;top:362.25px;font-size:15px;color:#272b30;font-weight:700;letter-spacing:-0.132px">Type d'hébergement</span>
<span class="t" style="left:25.81px;top:400.25px;font-size:15px;color:#272b30;transform:scale(0.9447,1);transform-origin:0 13.00px">Résumé</span>
<span class="t" style="left:179.50px;top:400.25px;font-size:15px;color:#272b30;letter-spacing:-0.156px">Prises / Total</span>
<span class="t" style="left:180.50px;top:427.25px;font-size:15px;color:#272b30;letter-spacing:-0.199px">Occupation</span>
<span class="t" style="left:1279.20px;top:314.80px;font-size:15px;color:#ffffff;letter-spacing:-0.056px;-webkit-text-stroke:0.4px #ffffff">Ajouter un hébergement</span>
<span class="t" style="left:1279.00px;top:341.20px;font-size:15px;color:#272b30;letter-spacing:-0.036px">Supprimer l'hébergement</span>
<span class="t" style="left:1279.00px;top:367.00px;font-size:15px;color:#272b30;letter-spacing:-0.104px">Journal historique</span>
<span class="t" style="left:333.90px;top:330.00px;font-size:13px;color:#272b30;transform:scale(0.9278,1);transform-origin:0 11.00px">Samedi</span>
<span class="t" style="left:335.77px;top:347.75px;font-size:14px;color:#272b30;font-weight:700;letter-spacing:0.500px">06/09</span>
<span class="t" style="left:333.27px;top:367.00px;font-size:14px;color:#272b30;letter-spacing:-0.178px">4,84 %</span>
<span class="t" style="left:496.83px;top:330.00px;font-size:13px;color:#272b30;letter-spacing:-0.221px">Dimanche</span>
<span class="t" style="left:507.08px;top:347.75px;font-size:14px;color:#272b30;font-weight:700;letter-spacing:0.500px">07/09</span>
<span class="t" style="left:504.58px;top:367.00px;font-size:14px;color:#272b30;letter-spacing:-0.178px">5,24 %</span>
<span class="t" style="left:680.85px;top:330.00px;font-size:13px;color:#272b30;letter-spacing:-0.105px">Lundi</span>
<span class="t" style="left:678.48px;top:347.75px;font-size:14px;color:#272b30;font-weight:700;letter-spacing:0.500px">08/09</span>
<span class="t" style="left:675.98px;top:367.00px;font-size:14px;color:#272b30;letter-spacing:-0.178px">6,05 %</span>
<span class="t" style="left:851.40px;top:330.00px;font-size:13px;color:#272b30;letter-spacing:0.095px">Mardi</span>
<span class="t" style="left:849.77px;top:347.75px;font-size:14px;color:#272b30;font-weight:700;letter-spacing:0.500px">09/09</span>
<span class="t" style="left:847.27px;top:367.00px;font-size:14px;color:#272b30;letter-spacing:-0.178px">6,05 %</span>
<span class="t" style="left:1013.70px;top:330.00px;font-size:13px;color:#272b30;letter-spacing:0.046px">Mercredi</span>
<span class="t" style="left:1021.08px;top:347.75px;font-size:14px;color:#272b30;font-weight:700;letter-spacing:0.500px">10/09</span>
<span class="t" style="left:1018.58px;top:367.00px;font-size:14px;color:#272b30;letter-spacing:-0.178px">5,24 %</span>
<span class="t" style="left:1196.30px;top:330.00px;font-size:13px;color:#272b30;transform:scale(0.8977,1);transform-origin:0 11.00px">Jeudi</span>
<span class="t" style="left:1192.38px;top:347.75px;font-size:14px;color:#272b30;font-weight:700;transform:scale(1.0805,1);transform-origin:0 12.00px">11/09</span>
<span class="t" style="left:1189.88px;top:367.00px;font-size:14px;color:#272b30;letter-spacing:-0.178px">5,24 %</span>
<span class="t" style="left:340.40px;top:401.00px;font-size:14px;color:#272b30;letter-spacing:0.136px">0 / 0</span>
<span class="t" style="left:324.00px;top:428.25px;font-size:14px;color:#272b30">0</span>
<span class="t" style="left:351.00px;top:428.25px;font-size:14px;color:#272b30">/</span>
<span class="t" style="left:366.38px;top:428.25px;font-size:14px;color:#272b30">0</span>
<span class="t" style="left:511.70px;top:401.00px;font-size:14px;color:#272b30;letter-spacing:0.136px">0 / 0</span>
<span class="t" style="left:495.30px;top:428.25px;font-size:14px;color:#272b30">0</span>
<span class="t" style="left:522.30px;top:428.25px;font-size:14px;color:#272b30">/</span>
<span class="t" style="left:537.68px;top:428.25px;font-size:14px;color:#272b30">0</span>
<span class="t" style="left:683.10px;top:401.00px;font-size:14px;color:#272b30;letter-spacing:0.136px">0 / 0</span>
<span class="t" style="left:666.70px;top:428.25px;font-size:14px;color:#272b30">0</span>
<span class="t" style="left:693.70px;top:428.25px;font-size:14px;color:#272b30">/</span>
<span class="t" style="left:709.08px;top:428.25px;font-size:14px;color:#272b30">0</span>
<span class="t" style="left:854.40px;top:401.00px;font-size:14px;color:#272b30;letter-spacing:0.136px">0 / 0</span>
<span class="t" style="left:838.00px;top:428.25px;font-size:14px;color:#272b30">0</span>
<span class="t" style="left:865.00px;top:428.25px;font-size:14px;color:#272b30">/</span>
<span class="t" style="left:880.38px;top:428.25px;font-size:14px;color:#272b30">0</span>
<span class="t" style="left:1025.70px;top:401.00px;font-size:14px;color:#272b30;letter-spacing:0.136px">0 / 0</span>
<span class="t" style="left:1009.30px;top:428.25px;font-size:14px;color:#272b30">0</span>
<span class="t" style="left:1036.30px;top:428.25px;font-size:14px;color:#272b30">/</span>
<span class="t" style="left:1051.67px;top:428.25px;font-size:14px;color:#272b30">0</span>
<span class="t" style="left:1197.00px;top:401.00px;font-size:14px;color:#272b30;letter-spacing:0.136px">0 / 0</span>
<span class="t" style="left:1180.60px;top:428.25px;font-size:14px;color:#272b30">0</span>
<span class="t" style="left:1207.60px;top:428.25px;font-size:14px;color:#272b30">/</span>
<span class="t" style="left:1222.97px;top:428.25px;font-size:14px;color:#272b30">0</span>
<span class="t" style="left:1368.40px;top:401.00px;font-size:14px;color:#272b30;letter-spacing:0.136px">0 / 0</span>
<span class="t" style="left:1352.00px;top:428.25px;font-size:14px;color:#272b30">0</span>
<span class="t" style="left:1379.00px;top:428.25px;font-size:14px;color:#272b30">/</span>
<span class="t" style="left:1394.38px;top:428.25px;font-size:14px;color:#272b30">0</span>
<span class="t" style="left:25.60px;top:474.90px;font-size:14px;color:#272b30;letter-spacing:0.364px">Kiwi</span>
<span class="t" style="left:33.00px;top:499.75px;font-size:17px;color:#272b30">2</span>
<span class="t" style="left:59.35px;top:499.75px;font-size:17px;color:#272b30">0</span>
<span class="t" style="left:83.95px;top:499.75px;font-size:17px;color:#272b30">0</span>
<span class="t" style="left:113.62px;top:499.75px;font-size:17px;color:#272b30">0</span>
<span class="t" style="left:151.95px;top:499.75px;font-size:17px;color:#6a4414">|</span>
<span class="t" style="left:25.60px;top:539.90px;font-size:14px;color:#272b30;letter-spacing:0.364px">Kiwi</span>
<span class="t" style="left:33.00px;top:564.75px;font-size:17px;color:#272b30">2</span>
<span class="t" style="left:59.35px;top:564.75px;font-size:17px;color:#272b30">0</span>
<span class="t" style="left:83.95px;top:564.75px;font-size:17px;color:#272b30">0</span>
<span class="t" style="left:113.62px;top:564.75px;font-size:17px;color:#272b30">0</span>
<span class="t" style="left:151.95px;top:564.75px;font-size:17px;color:#6a4414">|</span>
<span class="t" style="left:25.73px;top:604.90px;font-size:14px;color:#272b30;transform:scale(0.8715,1);transform-origin:0 12.00px">FRAISE</span>
<span class="t" style="left:33.00px;top:629.75px;font-size:17px;color:#272b30">2</span>
<span class="t" style="left:59.35px;top:629.75px;font-size:17px;color:#272b30">0</span>
<span class="t" style="left:83.95px;top:629.75px;font-size:17px;color:#272b30">0</span>
<span class="t" style="left:113.62px;top:629.75px;font-size:17px;color:#272b30">0</span>
<span class="t" style="left:151.95px;top:629.75px;font-size:17px;color:#6a4414">|</span>
<span class="t" style="left:945.95px;top:12.00px;font-size:11px;color:#ffffff;font-weight:700;-webkit-text-stroke:0.3px #ffffff">2</span>
<span class="t" style="left:1415.80px;top:20.20px;font-size:11px;color:#ffffff;letter-spacing:-0.037px">AD</span>
<span class="t" style="left:311.20px;top:186.00px;font-size:9.5px;color:#ffffff;font-weight:700;transform:scale(1.1800,1.17);transform-origin:0 8.00px">3</span>
<span class="t" style="left:503.70px;top:186.00px;font-size:9.5px;color:#ffffff;font-weight:700;transform:scale(1.3200,1.17);transform-origin:0 8.00px">0</span>
<span class="t" style="left:631.95px;top:186.00px;font-size:9.5px;color:#ffffff;font-weight:700;transform:scale(1.3200,1.17);transform-origin:0 8.00px">0</span>
<span class="t" style="left:764.95px;top:186.00px;font-size:9.5px;color:#ffffff;font-weight:700;transform:scale(1.3200,1.17);transform-origin:0 8.00px">0</span>
<span class="t" style="left:881.95px;top:186.00px;font-size:9.5px;color:#ffffff;font-weight:700;transform:scale(1.3200,1.17);transform-origin:0 8.00px">0</span>
<span class="t" style="left:1010.95px;top:186.00px;font-size:9.5px;color:#ffffff;font-weight:700;transform:scale(1.3200,1.17);transform-origin:0 8.00px">0</span>
<span class="t" style="left:1142.70px;top:186.00px;font-size:9.5px;color:#ffffff;font-weight:700;transform:scale(1.3200,1.17);transform-origin:0 8.00px">0</span>
<span class="t" style="left:1363.20px;top:186.00px;font-size:9.5px;color:#ffffff;font-weight:700;transform:scale(1.3200,1.17);transform-origin:0 8.00px">0</span>
<span class="t" style="left:99.95px;top:223.00px;font-size:9.5px;color:#ffffff;font-weight:700;transform:scale(1.3200,1.17);transform-origin:0 8.00px">0</span>
<span class="t" style="left:201.95px;top:223.00px;font-size:9.5px;color:#ffffff;font-weight:700;transform:scale(1.3200,1.17);transform-origin:0 8.00px">0</span>
<span class="t" style="left:292.70px;top:223.00px;font-size:9.5px;color:#ffffff;font-weight:700;transform:scale(1.3200,1.17);transform-origin:0 8.00px">0</span>
<span class="t" style="left:385.70px;top:223.00px;font-size:9.5px;color:#ffffff;font-weight:700;transform:scale(1.3200,1.17);transform-origin:0 8.00px">0</span>
<span class="t" style="left:478.70px;top:223.00px;font-size:9.5px;color:#ffffff;font-weight:700;transform:scale(1.3200,1.17);transform-origin:0 8.00px">0</span>
</body></html>
